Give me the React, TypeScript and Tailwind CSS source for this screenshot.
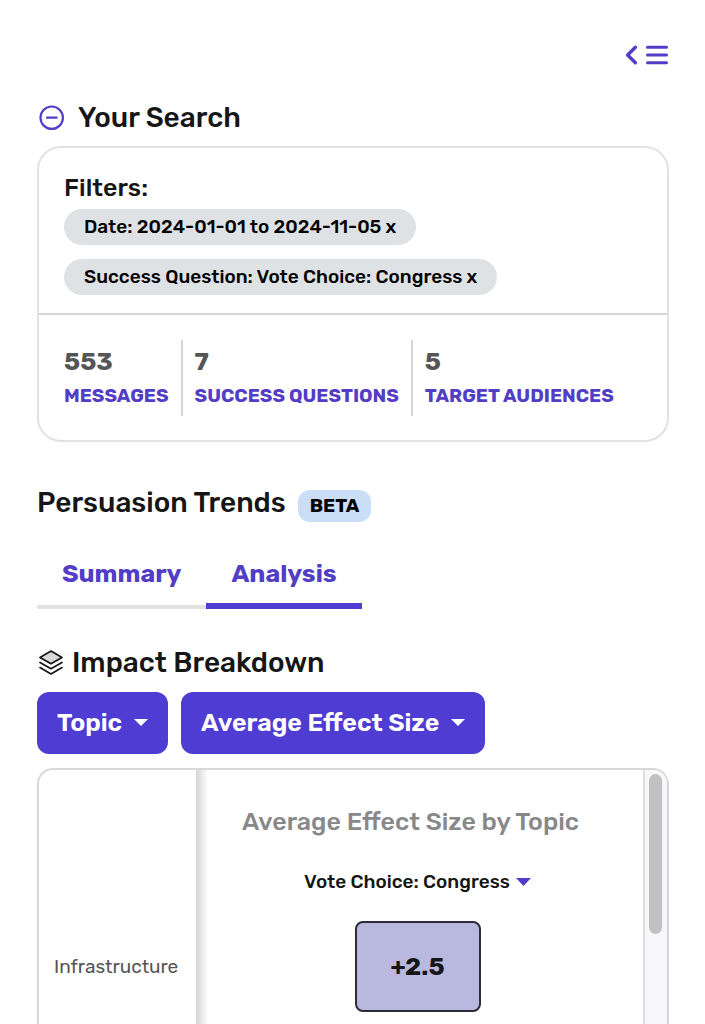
import React from "react";

const filters = [
  "Date: 2024-01-01 to 2024-11-05",
  "Success Question: Vote Choice: Congress",
];

const stats = [
  { value: "553", label: "MESSAGES" },
  { value: "7", label: "SUCCESS QUESTIONS" },
  { value: "5", label: "TARGET AUDIENCES" },
];

function Caret({ className }: { className: string }) {
  return (
    <svg viewBox="0 0 14 8" preserveAspectRatio="none" className={className} fill="currentColor" aria-hidden="true">
      <path d="M0 0h14L7 8z" />
    </svg>
  );
}

function MenuIcon() {
  return (
    <svg width="44" height="22" viewBox="0 0 44 22" fill="none" stroke="currentColor" strokeWidth="3" strokeLinecap="round" strokeLinejoin="round" aria-hidden="true">
      <path d="M10.4 3.2 2.6 11l7.8 7.8" strokeWidth="3.4" />
      <path d="M22.5 3.2h19M22.5 11h19M22.5 18.8h19" />
    </svg>
  );
}

function CollapseIcon() {
  return (
    <svg width="26" height="26" viewBox="0 0 26 26" fill="none" stroke="currentColor" strokeWidth="2.2" strokeLinecap="round" aria-hidden="true">
      <circle cx="12.7" cy="12.7" r="11.2" />
      <path d="M8 12.7h9.6" />
    </svg>
  );
}

function LayersIcon() {
  return (
    <svg width="26" height="26" viewBox="0 0 26 26" fill="none" stroke="currentColor" strokeWidth="1.7" strokeLinejoin="round" strokeLinecap="round" aria-hidden="true">
      <path d="M13 1 24 7.4 13 13.8 2 7.4z" fill="#d8d8d8" />
      <path d="M2 12.4l11 6.4 11-6.4" />
      <path d="M2 17.6l11 6.4 11-6.4" />
    </svg>
  );
}

function DropdownButton({ label }: { label: string }) {
  return (
    <button type="button" aria-haspopup="listbox" className="flex h-[62px] items-center gap-3 rounded-xl bg-[#4f3cd3] px-5 text-[25px] leading-8 font-semibold text-white">
      {label}
      <Caret className="mb-0.5 h-[7px] w-3.5" />
    </button>
  );
}

export default function App() {
  return (
    <main className="flex h-screen min-h-[900px] flex-col overflow-hidden bg-white pt-11 pr-9 pl-[37px] font-['Rubik','Roboto','Liberation_Sans',sans-serif] text-[#161616]">
      <header className="flex justify-end">
        <button type="button" aria-label="Open menu" className="text-[#523dc6]">
          <MenuIcon />
        </button>
      </header>

      <section>
        <div className="mt-8 flex h-10 items-center gap-[13px] pl-0.5">
          <button type="button" aria-label="Collapse search" className="text-[#523dc6]">
            <CollapseIcon />
          </button>
          <h2 className="text-[28px] leading-10 font-medium">Your Search</h2>
        </div>

        <div className="mt-2 rounded-3xl border-2 border-[#e2e2e2]">
          <div className="border-b-2 border-[#d6d6d6] px-[25px] pt-6 pb-[18px]">
            <h3 className="text-[25px] leading-8 font-medium">Filters:</h3>
            <ul className="mt-[5px] flex flex-col items-start gap-3.5">
              {filters.map((filter) => (
                <li key={filter} className="flex h-9 items-center gap-1 rounded-full bg-[#dfe2e5] px-5 text-[19px] leading-6 font-medium text-black">
                  {filter}
                  <button type="button" aria-label={`Remove ${filter}`}>x</button>
                </li>
              ))}
            </ul>
          </div>
          <dl className="flex px-[25px] pt-[25px] pb-6">
            {stats.map((stat) => (
              <div key={stat.label} className="flex h-[76px] flex-col-reverse justify-center border-r-2 border-[#d6d6d6] px-3 first:pl-0 last:border-r-0">
                <dt className="text-[19px] leading-8 font-bold whitespace-nowrap text-[#523dc6]">{stat.label}</dt>
                <dd className="text-[25px] leading-9 font-bold text-[#555]">{stat.value}</dd>
              </div>
            ))}
          </dl>
        </div>
      </section>

      <section className="mt-[41px] flex min-h-0 flex-1 flex-col">
        <div className="flex items-center gap-3">
          <h2 className="text-[28px] leading-10 font-medium">Persuasion Trends</h2>
          <span className="mt-1.5 rounded-xl bg-[#cbdef8] px-3 text-[19px] leading-8 font-bold text-black">BETA</span>
        </div>

        <div role="tablist" className="mt-7 flex h-[58px] text-[25px] leading-8 font-bold text-[#523dc6]">
          <button type="button" role="tab" aria-selected="false" className="flex items-start border-b-4 border-[#e2e2e2] px-[25px] pt-[7px]">
            Summary
          </button>
          <button type="button" role="tab" aria-selected="true" className="flex items-start border-b-6 border-[#4f3cd3] px-[25px] pt-[7px]">
            Analysis
          </button>
        </div>

        <h2 className="mt-[34px] flex items-center gap-2 pl-px text-[28px] leading-10 font-medium">
          <LayersIcon />
          Impact Breakdown
        </h2>

        <div className="mt-[9px] flex gap-[13px]">
          <DropdownButton label="Topic" />
          <DropdownButton label="Average Effect Size" />
        </div>

        <div className="mt-3.5 flex min-h-0 flex-1 overflow-hidden rounded-t-2xl border-2 border-b-0 border-[#d8d8d8]">
          <table className="h-full flex-1 border-collapse">
            <thead>
              <tr className="h-[132px]">
                <td className="relative w-[157px]">
                  <div className="absolute top-0 left-full h-screen w-3 bg-linear-to-r from-[#d4d4d4] to-white" aria-hidden="true" />
                </td>
                <th scope="col" className="pt-8 align-top font-medium">
                  <span className="block pr-[18px] text-[25px] leading-10 text-[#888]">Average Effect Size by Topic</span>
                  <button type="button" aria-haspopup="listbox" className="mt-6 mr-1 inline-flex items-center gap-1.5 align-top text-[19px] leading-8">
                    Vote Choice: Congress
                    <Caret className="h-2 w-[15px] text-[#523dc6]" />
                  </button>
                </th>
              </tr>
            </thead>
            <tbody>
              <tr>
                <th scope="row" className="px-[15px] pt-[51px] text-left align-top text-[19px] leading-7 font-normal text-[#555]">Infrastructure</th>
                <td className="pt-[19px] pr-1 align-top">
                  <div className="mx-auto flex h-[91px] w-[126px] items-center justify-center rounded-lg border-2 border-[#2d2b3a] bg-[#b9b9e0] text-[25px] leading-8 font-bold">+2.5</div>
                </td>
              </tr>
            </tbody>
          </table>
          <div className="w-6 border-l-2 border-[#dedee2] bg-[#f8f7fc] pt-1 pl-1" aria-hidden="true">
            <div className="h-40 w-[13px] rounded-full bg-[#c1c1c1]" />
          </div>
        </div>
      </section>
    </main>
  );
}
